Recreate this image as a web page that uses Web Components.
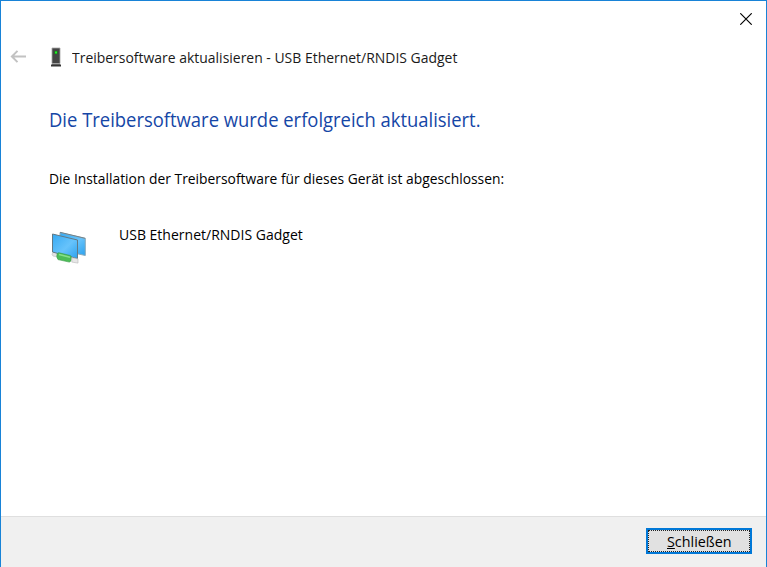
<!DOCTYPE html>
<html lang="de">
<head>
<meta charset="utf-8">
<title>Treibersoftware aktualisieren</title>
<style>
html, body { margin: 0; height: 100%; overflow: hidden; background: #fff; }
body { font: 15px/20px "Open Sans", "Noto Sans", sans-serif; color: #000; }
</style>
</head>
<body>
<wizard-window>
  <window-close slot="close"></window-close>
  <wizard-title slot="title"><fit-text width="385">Treibersoftware aktualisieren - USB Ethernet/RNDIS Gadget</fit-text></wizard-title>
  <wizard-page slot="page">
    <fit-text slot="heading" width="432">Die Treibersoftware wurde erfolgreich aktualisiert.</fit-text>
    <fit-text slot="message" width="455">Die Installation der Treibersoftware für dieses Gerät ist abgeschlossen:</fit-text>
    <device-item slot="device"><fit-text width="184">USB Ethernet/RNDIS Gadget</fit-text></device-item>
  </wizard-page>
  <push-button slot="actions"><fit-text width="65"><u>S</u>chließen</fit-text></push-button>
</wizard-window>
<script>
function define(name, html, Base = HTMLElement) {
  const template = document.createElement('template');
  template.innerHTML = html;
  customElements.define(name, class extends Base {
    constructor() {
      super();
      this.attachShadow({ mode: 'open' }).append(template.content.cloneNode(true));
    }
  });
}

define('wizard-window', `
<style>
:host { box-sizing: border-box; display: flex; flex-direction: column; height: 100vh; border: 1px solid #1883d7; border-bottom: 0; background: #fff; }
.close { display: flex; justify-content: flex-end; height: 40px; }
main { flex: 1; min-height: 0; }
footer { box-sizing: border-box; height: 51px; display: flex; justify-content: flex-end; align-items: flex-start; padding: 11px 14px 0; background: #f0f0f0; border-top: 1px solid #dfdfdf; }
</style>
<div class="close"><slot name="close"></slot></div>
<slot name="title"></slot>
<main><slot name="page"></slot></main>
<footer><slot name="actions"></slot></footer>`);

define('window-close', `
<style>:host { display: block; padding: 12px 14px 0 0; } svg { display: block; }</style>
<svg width="12" height="12" viewBox="0 0 12 12"><path d="M.3.3l11.4 11.4M11.7.3L.3 11.7" stroke="#000" stroke-width="1.15"/></svg>`);

define('wizard-title', `
<style>
:host { display: flex; align-items: center; height: 32px; padding-left: 9px; color: #1a1a1a; }
svg { display: block; flex: none; }
.tower { margin: 0 10px 0 23px; }
</style>
<svg width="17" height="14" viewBox="0 0 17 14"><path d="M16 6.5H2M7.5 .9L1.9 6.5l5.6 5.6" fill="none" stroke="#c2c2c2" stroke-width="2"/></svg>
<svg class="tower" width="12" height="20" viewBox="0 0 12 20">
  <path d="M2 1h8v15.5H2z" fill="#454545" stroke="#a5a5a5" stroke-width=".8"/>
  <path d="M2 17h8l1 1v1.5H1V18z" fill="#343434"/><path d="M2 17h8" stroke="#999" stroke-width=".8"/>
  <path d="M4.5 4h3v3h-3z" fill="#168316"/><path d="M5 4.5h2v2H5z" fill="#20f22b"/>
</svg>
<slot></slot>`);

define('wizard-page', `
<style>
:host { display: block; padding: 32px 48px 0; }
.heading { height: 30px; font-size: 20px; line-height: 30px; color: #1546a6; }
.message { padding: 33px 0 36px; }
</style>
<div class="heading"><slot name="heading"></slot></div>
<div class="message"><slot name="message"></slot></div>
<slot name="device"></slot>`);

define('device-item', `
<style>:host { display: flex; align-items: flex-start; } svg { flex: none; margin: 7px 32px 0 2px; }</style>
<svg width="36" height="34" viewBox="0 0 36 34">
  <defs><linearGradient id="screen" x2="1" y2="1"><stop stop-color="#35a9f3"/><stop offset=".55" stop-color="#67c3fb"/><stop offset="1" stop-color="#2ba1ee"/></linearGradient></defs>
  <path d="M9 1.5l25.3 6v17L9 19z" fill="url(#screen)" stroke="#8baabb"/>
  <path d="M9 1.3l25.3 6" stroke="#70838c"/>
  <path d="M2 21.2l5 .8v4l-5-.9q-2-1.8 0-3.9" fill="#e2e2e2" stroke="#c0c0c0" stroke-width=".6"/>
  <path d="M1.5 3l25 6v18.6L1.5 21z" fill="url(#screen)" stroke="#617985"/>
  <path d="M6.2 22.7q.6-1.2 2-.9l11 2.7q1.2.3 1.2 2.2 0 4.2-2.1 4.4L7 28.6q-2-2.4-.8-5.9z" fill="#4cbd57" stroke="#389847" stroke-width=".6"/>
  <path d="M8 23.5l11 2.7" stroke="#86df89" stroke-width="1.5"/>
  <path d="M20.8 26.7l6.2 1.2v4.2l-6.2-1z" fill="#e7e7e7" stroke="#b5b5b5" stroke-width=".6"/>
</svg>
<slot></slot>`);

define('push-button', `
<style>
:host { box-sizing: border-box; display: block; width: 106px; height: 26px; border: 2px solid #0078d7; background: #e1e1e1; }
div { box-sizing: border-box; height: 100%; display: flex; justify-content: center; align-items: center; border: 1px dotted #222; }
</style>
<div><slot></slot></div>`);

/* A single line of text, condensed or widened to the width attribute. */
define('fit-text', `
<style>:host { display: block; height: 1lh; white-space: nowrap; } span { display: inline-block; transform-origin: 0 50%; }</style>
<span><slot></slot></span>`, class extends HTMLElement {
  connectedCallback() {
    const width = Number(this.getAttribute('width'));
    this.style.width = width + 'px';
    const span = this.shadowRoot.querySelector('span');
    requestAnimationFrame(() => { span.style.transform = 'scaleX(' + width / span.offsetWidth + ')'; });
  }
});
</script>
</body>
</html>
